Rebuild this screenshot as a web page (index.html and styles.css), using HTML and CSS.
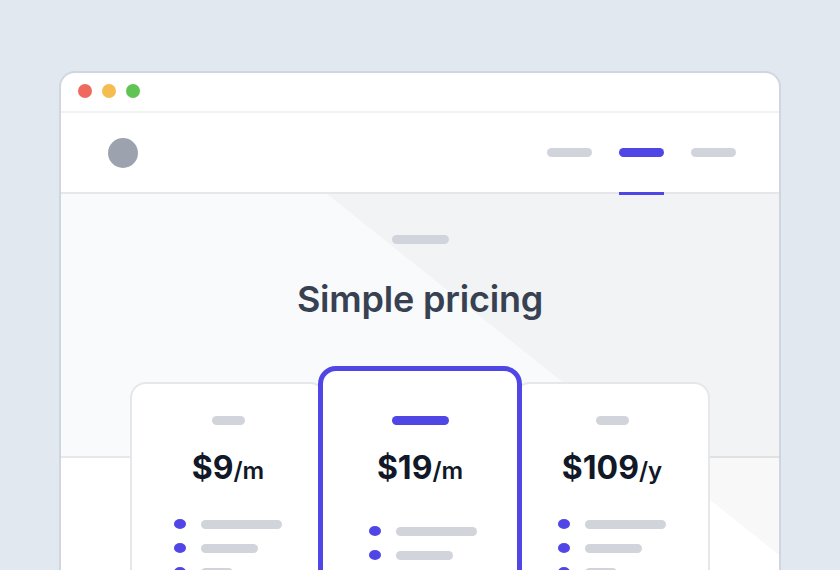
FILE: index.html
```html
<!DOCTYPE html>
<html lang="en">
<head>
<meta charset="utf-8">
<title>Simple pricing</title>
<link rel="stylesheet" href="styles.css">
</head>
<body>
<div class="window">
  <div class="titlebar">
    <span class="light red"></span>
    <span class="light yellow"></span>
    <span class="light green"></span>
  </div>
  <header class="header">
    <span class="logo"></span>
    <nav class="nav">
      <span class="nav-item"><span class="nav-pill"></span></span>
      <span class="nav-item active"><span class="nav-pill"></span></span>
      <span class="nav-item"><span class="nav-pill"></span></span>
    </nav>
  </header>
  <div class="page">
    <section class="hero">
      <div class="hero-content">
        <span class="eyebrow"></span>
        <h1 class="title">Simple pricing</h1>
      </div>
    </section>
    <section class="lower">
      <div class="cards">
        <div class="card side">
          <span class="tag"></span>
          <div class="price">$9<span class="per">/m</span></div>
          <ul class="features">
            <li><span class="dot"></span><span class="bar b1"></span></li>
            <li><span class="dot"></span><span class="bar b2"></span></li>
            <li><span class="dot"></span><span class="bar b3"></span></li>
            <li><span class="dot"></span><span class="bar b2"></span></li>
          </ul>
        </div>
        <div class="card featured">
          <span class="tag"></span>
          <div class="price">$19<span class="per">/m</span></div>
          <ul class="features">
            <li><span class="dot"></span><span class="bar b1"></span></li>
            <li><span class="dot"></span><span class="bar b2"></span></li>
            <li><span class="dot"></span><span class="bar b3"></span></li>
            <li><span class="dot"></span><span class="bar b2"></span></li>
          </ul>
        </div>
        <div class="card side">
          <span class="tag"></span>
          <div class="price">$109<span class="per">/y</span></div>
          <ul class="features">
            <li><span class="dot"></span><span class="bar b1"></span></li>
            <li><span class="dot"></span><span class="bar b2"></span></li>
            <li><span class="dot"></span><span class="bar b3"></span></li>
            <li><span class="dot"></span><span class="bar b2"></span></li>
          </ul>
        </div>
      </div>
    </section>
  </div>
</div>
</body>
</html>
```

FILE: styles.css
```css
* { box-sizing: border-box; }

html, body {
  margin: 0;
  padding: 0;
  height: 100%;
  overflow: hidden;
}

body {
  background: #e2e8f0;
  font-family: Inter, "Noto Sans", "Liberation Sans", sans-serif;
}

.window {
  margin: 71px 0 0 59px;
  width: 722px;
  height: 560px;
  background: #ffffff;
  border: 2px solid #cfd6e0;
  border-bottom: 0;
  border-radius: 16px 16px 0 0;
  overflow: hidden;
  display: flex;
  flex-direction: column;
}

.titlebar {
  height: 40px;
  padding: 11px 0 0 17px;
  display: flex;
  gap: 10px;
  border-bottom: 2px solid #f1f2f4;
  flex: none;
}

.light {
  width: 14px;
  height: 14px;
  border-radius: 50%;
}
.red { background: #ef6a5e; }
.yellow { background: #f5bd4f; }
.green { background: #5fc454; }

.header {
  height: 81px;
  flex: none;
  display: flex;
  align-items: center;
  justify-content: space-between;
  padding: 0 43px 0 47px;
  border-bottom: 2px solid #e5e7eb;
  position: relative;
  z-index: 3;
}

.logo {
  width: 30px;
  height: 30px;
  border-radius: 50%;
  background: #9ca3af;
}

.nav {
  display: flex;
  gap: 27px;
  align-self: stretch;
}

.nav-item {
  position: relative;
  display: flex;
  align-items: center;
}

.nav-pill {
  width: 45px;
  height: 9px;
  border-radius: 5px;
  background: #d1d5db;
}

.nav-item.active .nav-pill { background: #4f46e5; }

.nav-item.active::after {
  content: "";
  position: absolute;
  left: 0;
  right: 0;
  bottom: -3px;
  height: 3px;
  background: #4f46e5;
}

.page {
  position: relative;
  flex: 1;
  display: flex;
  flex-direction: column;
}

.page::before {
  content: "";
  position: absolute;
  inset: 0;
  background: rgba(30, 41, 59, 0.03);
  clip-path: polygon(266px 0, 718px 0, 718px 361px);
  z-index: 1;
  pointer-events: none;
}

.hero {
  height: 264px;
  flex: none;
  background: #f9fafb;
  border-bottom: 2px solid #e7e8eb;
}

.hero-content {
  position: relative;
  z-index: 2;
  display: flex;
  flex-direction: column;
  align-items: center;
  padding-top: 41px;
}

.eyebrow {
  width: 57px;
  height: 9px;
  border-radius: 5px;
  background: #d1d5db;
}

.title {
  margin: 33px 0 0;
  font-size: 36px;
  line-height: 44px;
  font-weight: 600;
  color: #374151;
  letter-spacing: -0.2px;
}

.lower {
  flex: 1;
  background: #ffffff;
}

.cards {
  position: relative;
  z-index: 4;
  margin-top: -92px;
  display: flex;
  justify-content: center;
  align-items: flex-start;
}

.card {
  background: #ffffff;
  display: flex;
  flex-direction: column;
  align-items: center;
}

.card.side {
  width: 196px;
  height: 260px;
  margin-top: 16px;
  border: 2px solid #e5e7eb;
  border-radius: 16px;
  padding-top: 32px;
}

.card.side:first-child { margin-right: -8px; }
.card.side:last-child { margin-left: -8px; }

.card.featured {
  position: relative;
  z-index: 2;
  width: 204px;
  height: 280px;
  border: 5px solid #4f46e5;
  border-radius: 18px;
  padding-top: 45px;
}

.tag {
  width: 33px;
  height: 9px;
  border-radius: 5px;
  background: #d1d5db;
}

.featured .tag {
  width: 57px;
  background: #4f46e5;
}

.price {
  margin-top: 25px;
  font-size: 32px;
  line-height: 36px;
  font-weight: 700;
  color: #111827;
}

.per {
  font-size: 24px;
  font-weight: 600;
}

.features {
  list-style: none;
  margin: 23px 0 0;
  padding: 0;
  width: 108px;
}

.featured .features { margin-top: 30px; margin-left: 6px; }

.features li {
  height: 24px;
  display: flex;
  align-items: center;
  gap: 15px;
}

.dot {
  width: 12px;
  height: 10px;
  border-radius: 50%;
  background: #4f46e5;
  flex: none;
}

.bar {
  height: 9px;
  border-radius: 5px;
  background: #d1d5db;
}

.b1 { width: 81px; }
.b2 { width: 57px; }
.b3 { width: 32px; }
```
